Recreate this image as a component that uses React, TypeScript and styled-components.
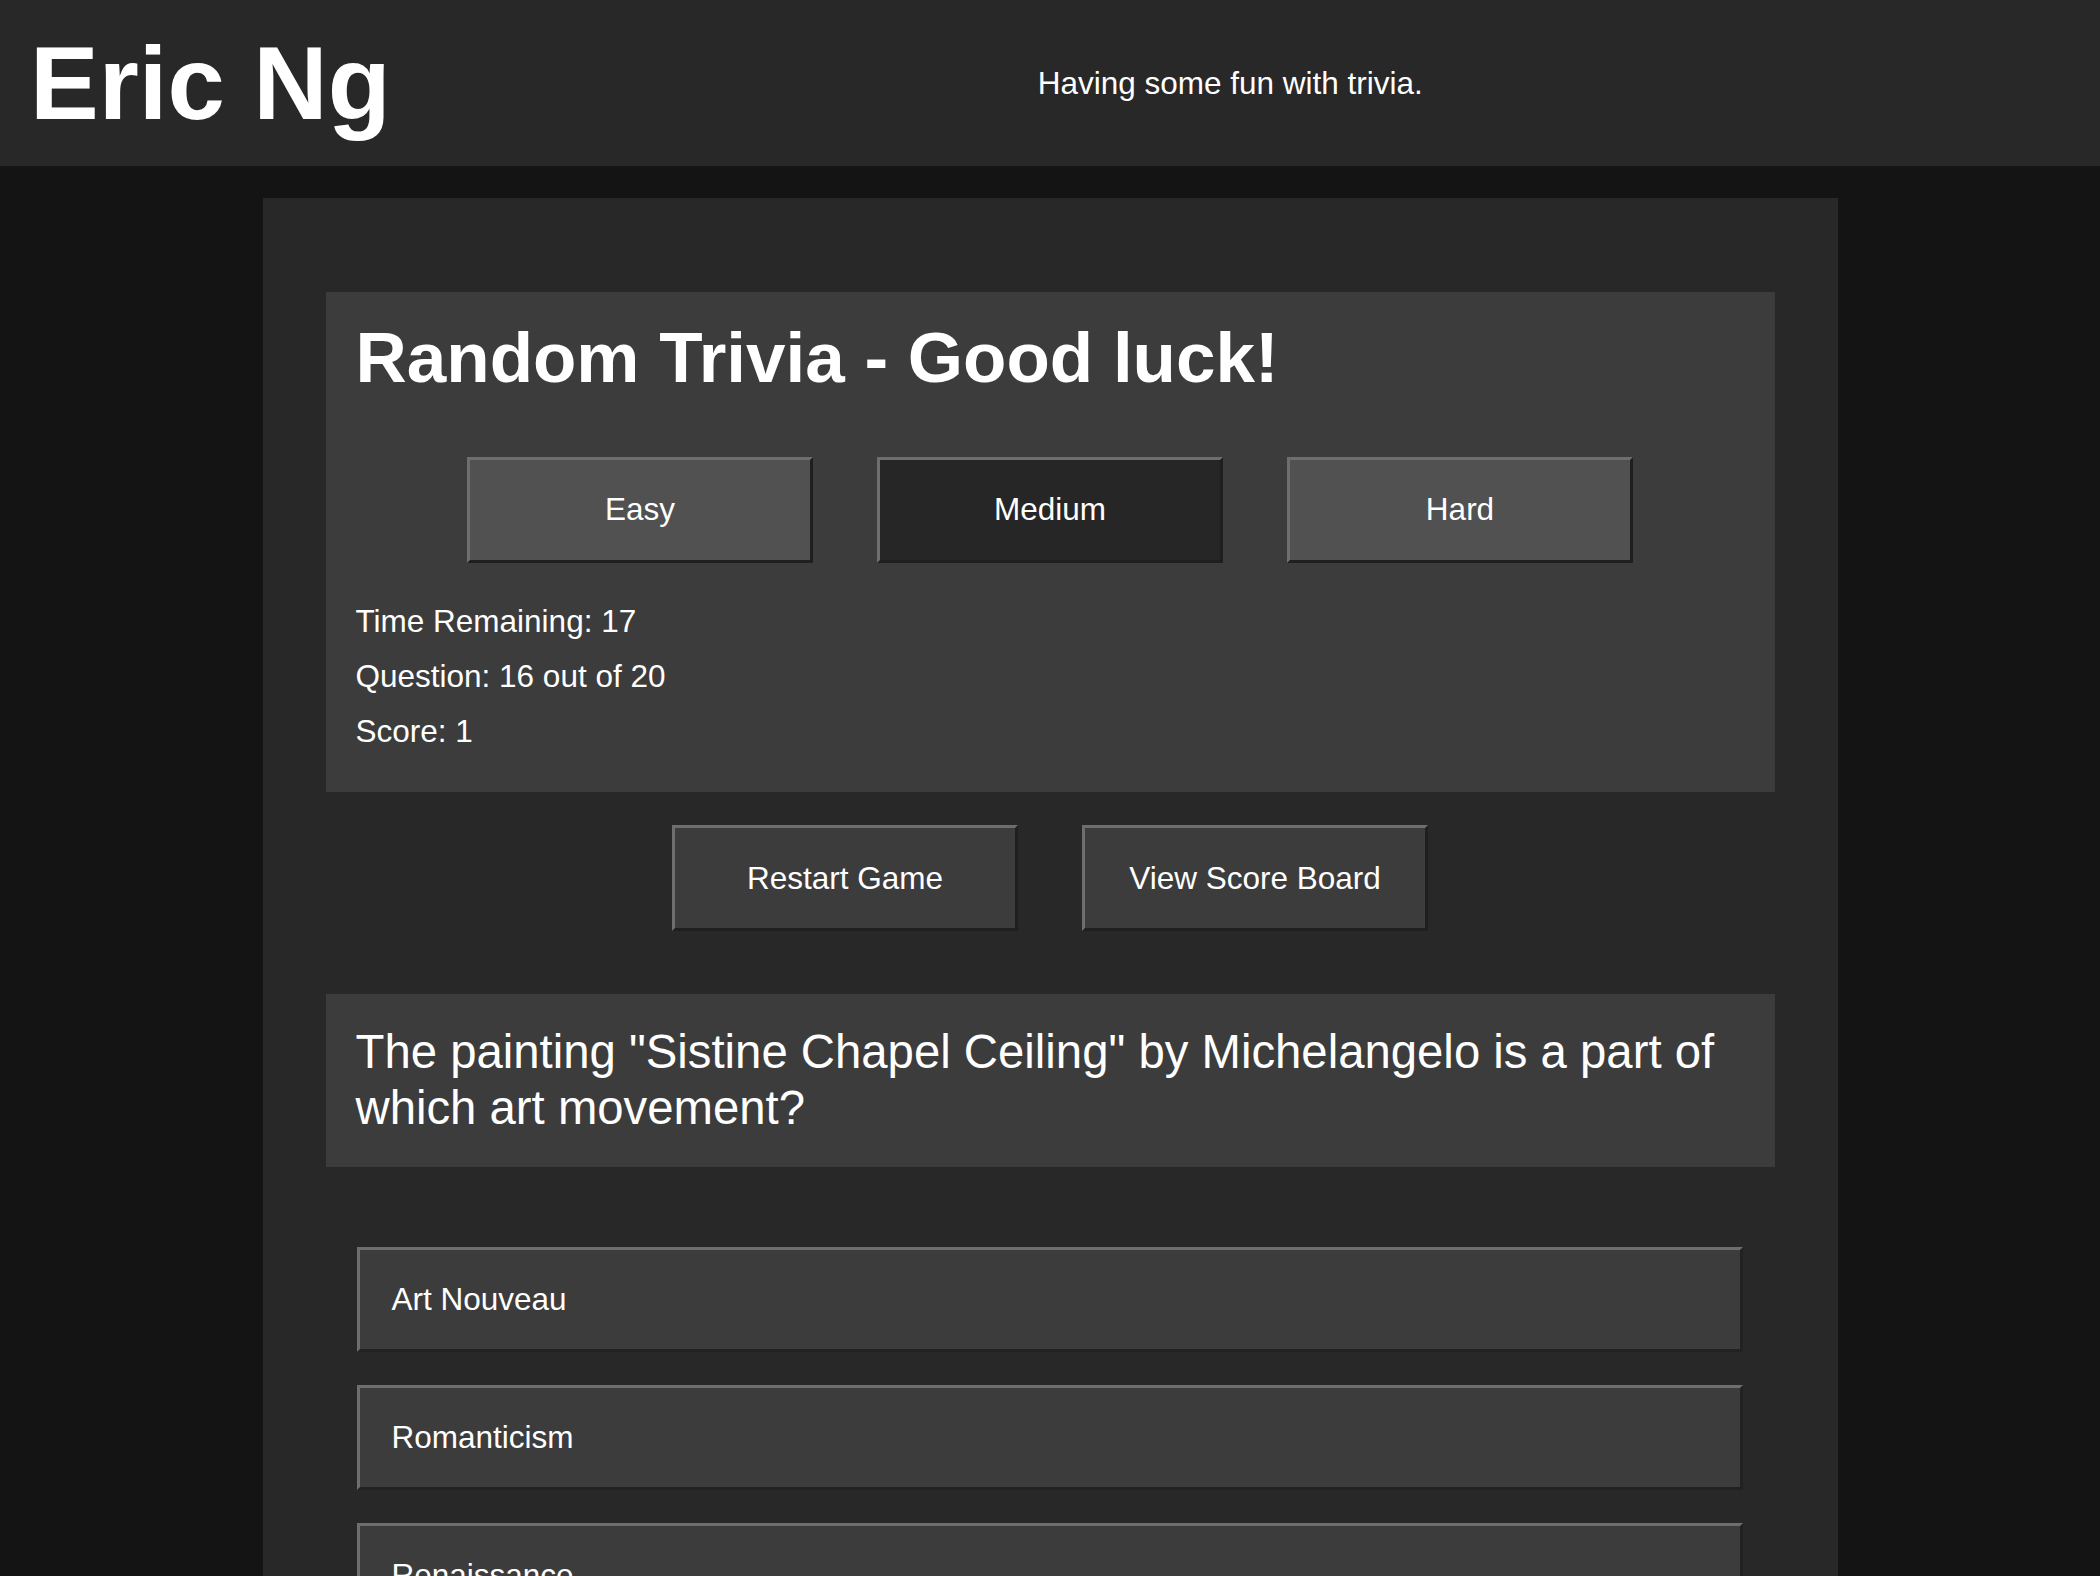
import React, { useState } from "react";
import styled, { createGlobalStyle } from "styled-components";

const GlobalStyle = createGlobalStyle`
  html, body {
    margin: 0;
    padding: 0;
    background: #141414;
    color: #ffffff;
    font-family: "Liberation Sans", Arial, sans-serif;
  }
  * { box-sizing: border-box; }
`;

const Header = styled.header`
  display: flex;
  align-items: center;
  height: 166px;
  padding: 0 30px;
  background: #282828;
`;

const SiteTitle = styled.h1`
  margin: 0;
  font-size: 103px;
  font-weight: 700;
  line-height: 1;
  color: #ffffff;
`;

const Tagline = styled.p`
  flex: 1;
  margin: 0;
  text-align: center;
  font-size: 31.5px;
  color: #ffffff;
`;

const Main = styled.main`
  width: 75%;
  margin: 32px auto 0;
  padding: 94px 63px 40px;
  background: #282828;
`;

const Panel = styled.section<{ $pad: string }>`
  background: #3c3c3c;
  padding: ${(p) => p.$pad};
`;

const GameTitle = styled.h2`
  margin: 0;
  font-size: 71px;
  font-weight: 700;
  line-height: 1.15;
`;

const ButtonRow = styled.div<{ $mt: number }>`
  display: flex;
  justify-content: center;
  gap: 64px;
  margin-top: ${(p) => p.$mt}px;
`;

const Button = styled.button<{ $bg: string }>`
  width: 346px;
  height: 106px;
  padding: 0;
  background: ${(p) => p.$bg};
  color: #ffffff;
  font-family: "Liberation Sans", Arial, sans-serif;
  font-size: 31.5px;
  border-style: solid;
  border-width: 3px;
  border-color: #6e6e6e #1f1f1f #1f1f1f #6e6e6e;
  cursor: pointer;
`;

const Stats = styled.div`
  margin-top: 40px;
  display: flex;
  flex-direction: column;
  gap: 19px;
`;

const Stat = styled.div`
  font-size: 31.5px;
  line-height: 1.15;
`;

const Question = styled.p`
  margin: 0;
  font-size: 47.3px;
  line-height: 1.17;
`;

const Answers = styled.div`
  display: flex;
  flex-direction: column;
  gap: 33px;
  margin-top: 80px;
  padding: 0 32px 0 31px;
`;

const Answer = styled.button`
  display: flex;
  align-items: center;
  width: 100%;
  height: 105px;
  padding: 0 0 0 32px;
  background: #3c3c3c;
  color: #ffffff;
  font-family: "Liberation Sans", Arial, sans-serif;
  font-size: 31.5px;
  text-align: left;
  border-style: solid;
  border-width: 3px;
  border-color: #6e6e6e #222222 #222222 #6e6e6e;
  cursor: pointer;
`;

const levels = ["Easy", "Medium", "Hard"];
const answers = ["Art Nouveau", "Romanticism", "Renaissance"];

export default function App() {
  const [level, setLevel] = useState("Medium");
  return (
    <>
      <GlobalStyle />
      <Header>
        <SiteTitle>Eric Ng</SiteTitle>
        <Tagline>Having some fun with trivia.</Tagline>
      </Header>
      <Main>
        <Panel $pad="25px 30px 43px">
          <GameTitle>Random Trivia - Good luck!</GameTitle>
          <ButtonRow $mt={58}>
            {levels.map((l) => (
              <Button
                key={l}
                $bg={l === level ? "#262626" : "#515151"}
                onClick={() => setLevel(l)}
              >
                {l}
              </Button>
            ))}
          </ButtonRow>
          <Stats>
            <Stat>Time Remaining: 17</Stat>
            <Stat>Question: 16 out of 20</Stat>
            <Stat>Score: 1</Stat>
          </Stats>
        </Panel>
        <ButtonRow $mt={33}>
          <Button $bg="#3c3c3c">Restart Game</Button>
          <Button $bg="#3c3c3c">View Score Board</Button>
        </ButtonRow>
        <Panel $pad="30px 30px 32px" style={{ marginTop: 63 }}>
          <Question>
            The painting "Sistine Chapel Ceiling" by Michelangelo is a part of
            which art movement?
          </Question>
        </Panel>
        <Answers>
          {answers.map((a) => (
            <Answer key={a}>{a}</Answer>
          ))}
        </Answers>
      </Main>
    </>
  );
}
